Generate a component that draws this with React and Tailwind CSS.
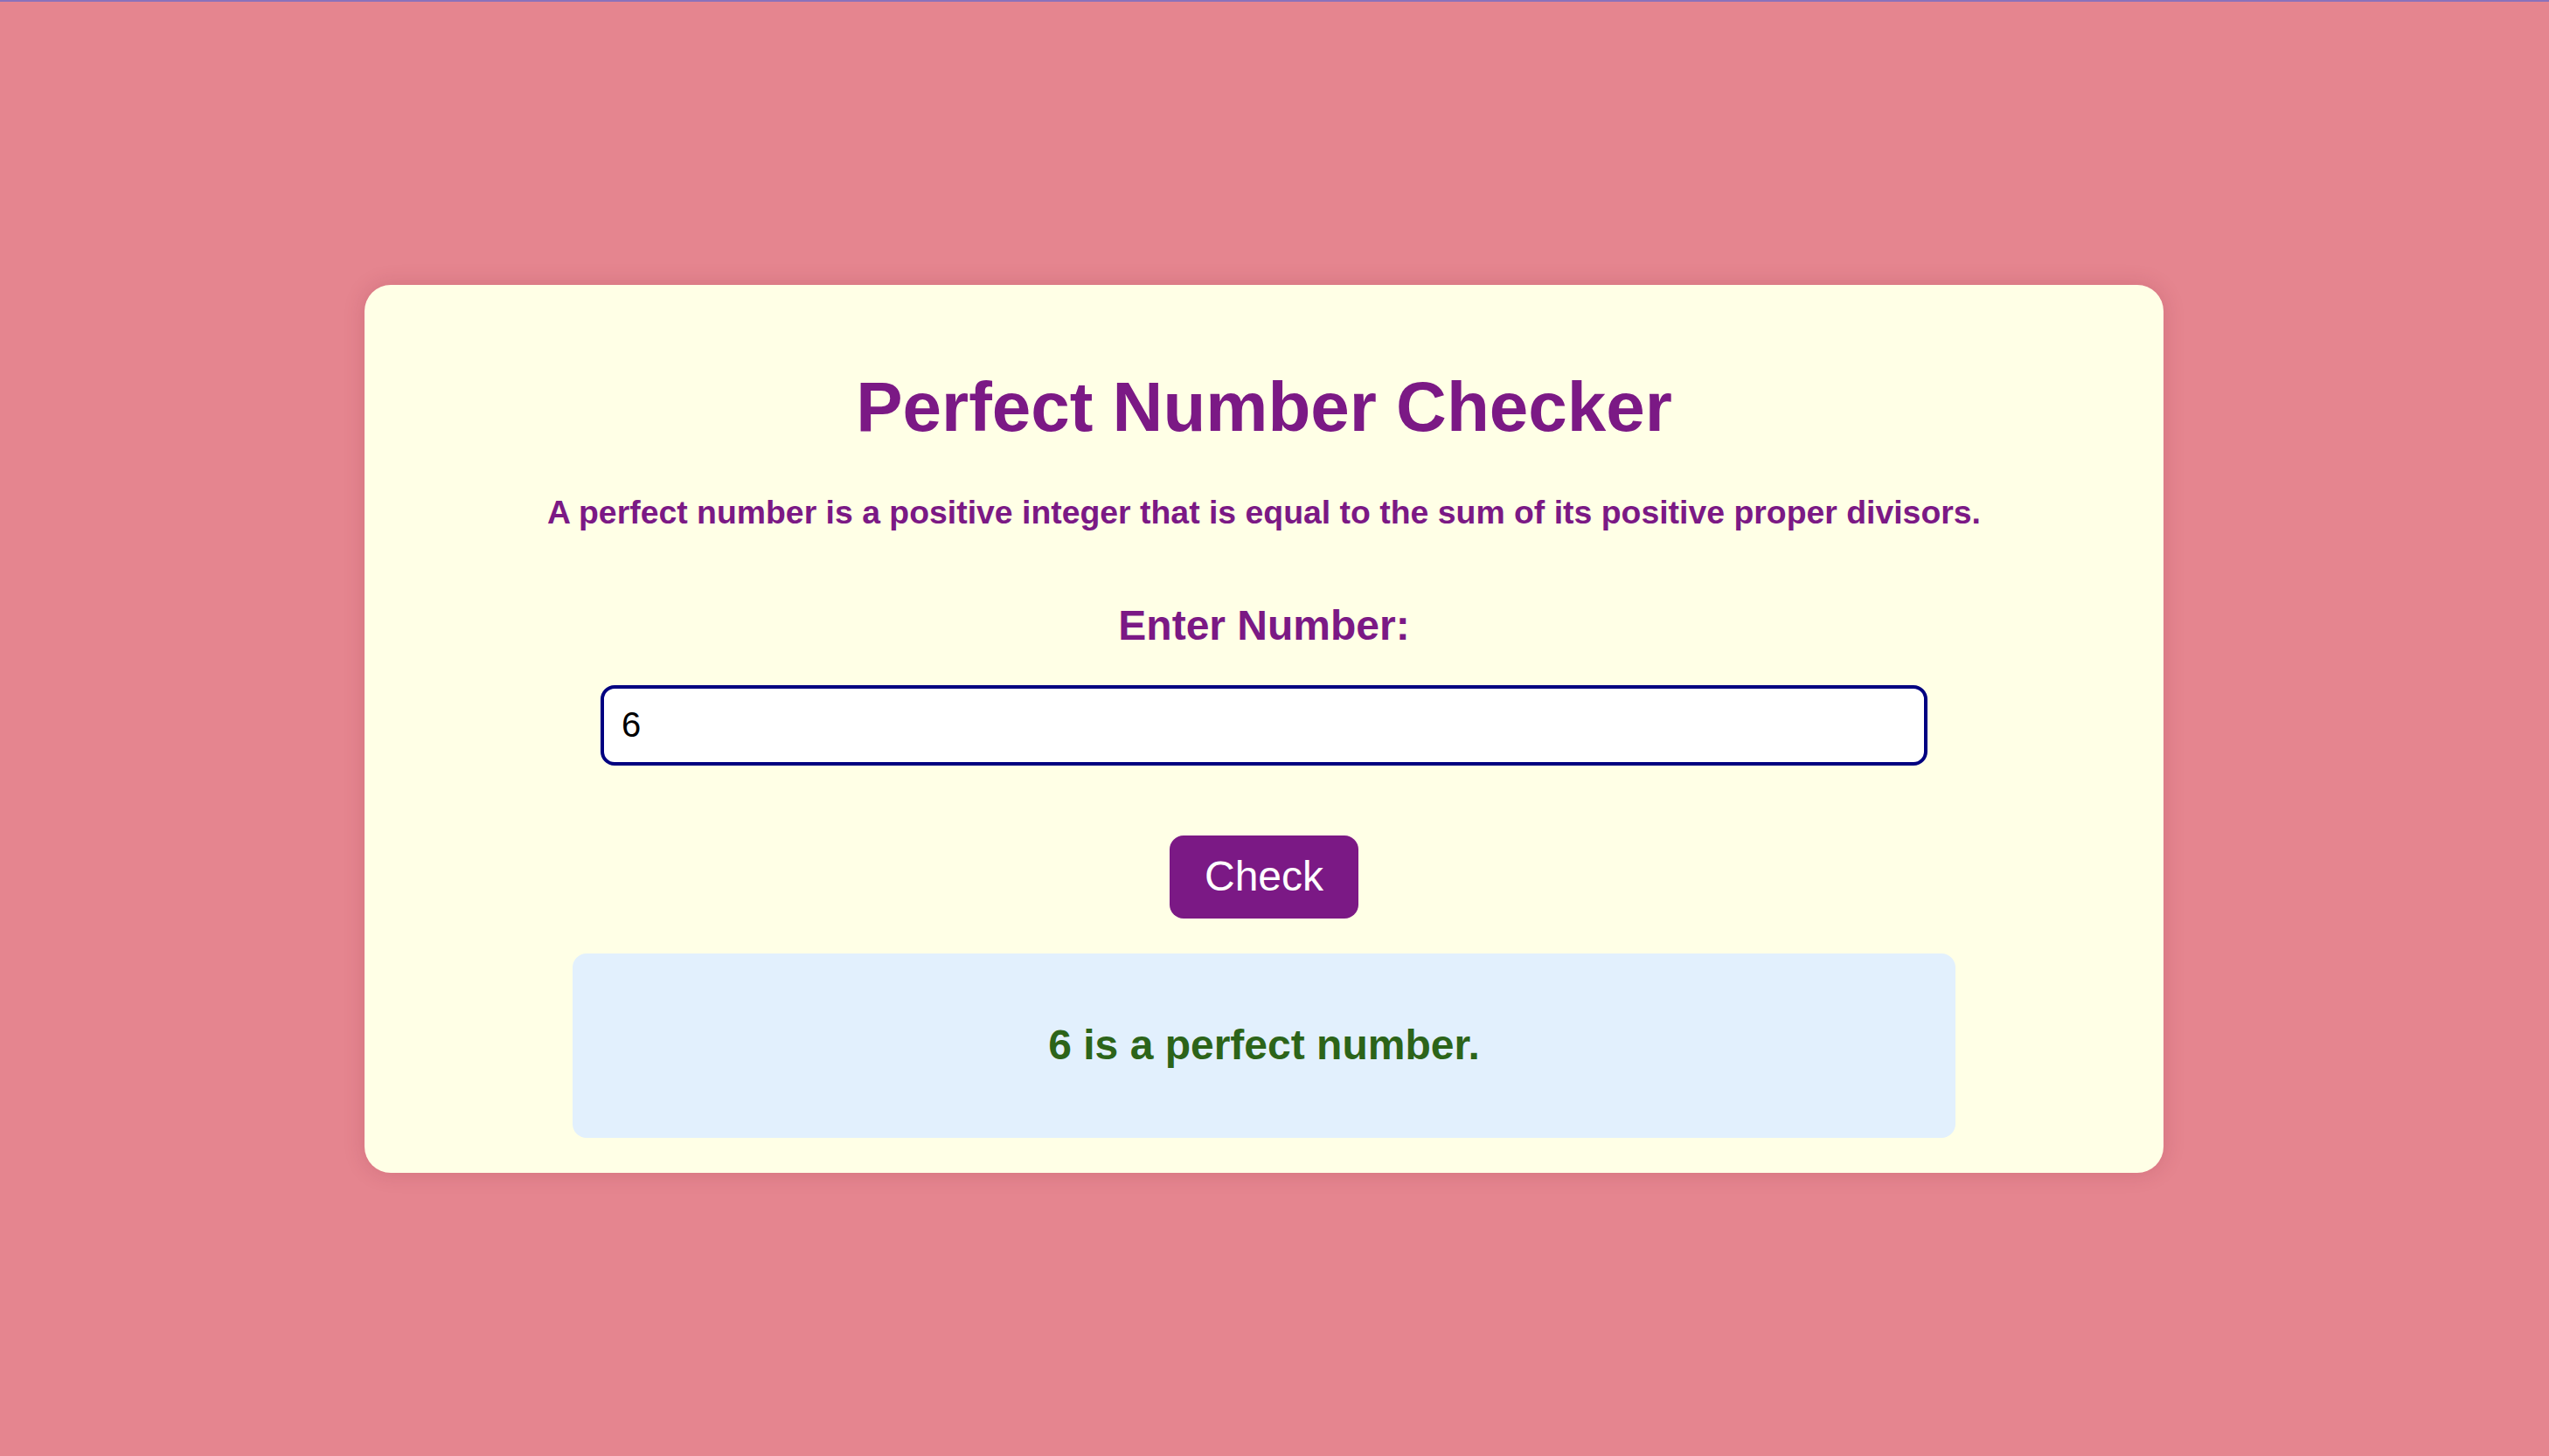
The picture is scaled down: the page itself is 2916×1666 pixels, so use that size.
import React from "react";

const font = { fontFamily: '"Liberation Sans", Arial, Helvetica, sans-serif' };

export default function App() {
  return (
    <div className="min-h-screen w-full bg-[#e5858f]" style={font}>
      {/* thin accent strip along the top edge */}
      <div className="h-[2px] w-full bg-[#8a72bb]" />

      <div className="flex h-[1664px] items-center justify-center pr-6">
        <div className="flex w-[2058px] flex-col items-center rounded-[30px] bg-[#ffffe6] pt-[100px] pb-[40px] shadow-[0_0_24px_rgba(120,30,50,0.18)]">
          <h1 className="text-[80px] font-bold leading-none text-[#7b1985]">
            Perfect Number Checker
          </h1>

          <p className="mt-[62px] text-[37.4px] font-bold leading-none text-[#7b1985]">
            A perfect number is a positive integer that is equal to the sum of its positive proper divisors.
          </p>

          <label
            htmlFor="num"
            className="mt-[86px] text-[48px] font-bold leading-none text-[#7b1985]"
          >
            Enter Number:
          </label>

          <input
            id="num"
            type="text"
            defaultValue="6"
            className="mt-[44px] h-[92px] w-[1518px] rounded-[16px] border-[4px] border-[#000080] bg-white pl-[20px] text-[40px] text-black outline-none"
            style={font}
          />

          <button
            type="button"
            className="mt-[80px] h-[95px] w-[216px] rounded-[16px] bg-[#7b1985] text-[48px] leading-none text-white"
            style={font}
          >
            Check
          </button>

          <div className="mt-[40px] flex h-[211px] w-[1582px] items-center justify-center rounded-[16px] bg-[#e2f0fd]">
            <p className="text-[48px] font-bold leading-none text-[#2c6419]">
              6 is a perfect number.
            </p>
          </div>
        </div>
      </div>
    </div>
  );
}
